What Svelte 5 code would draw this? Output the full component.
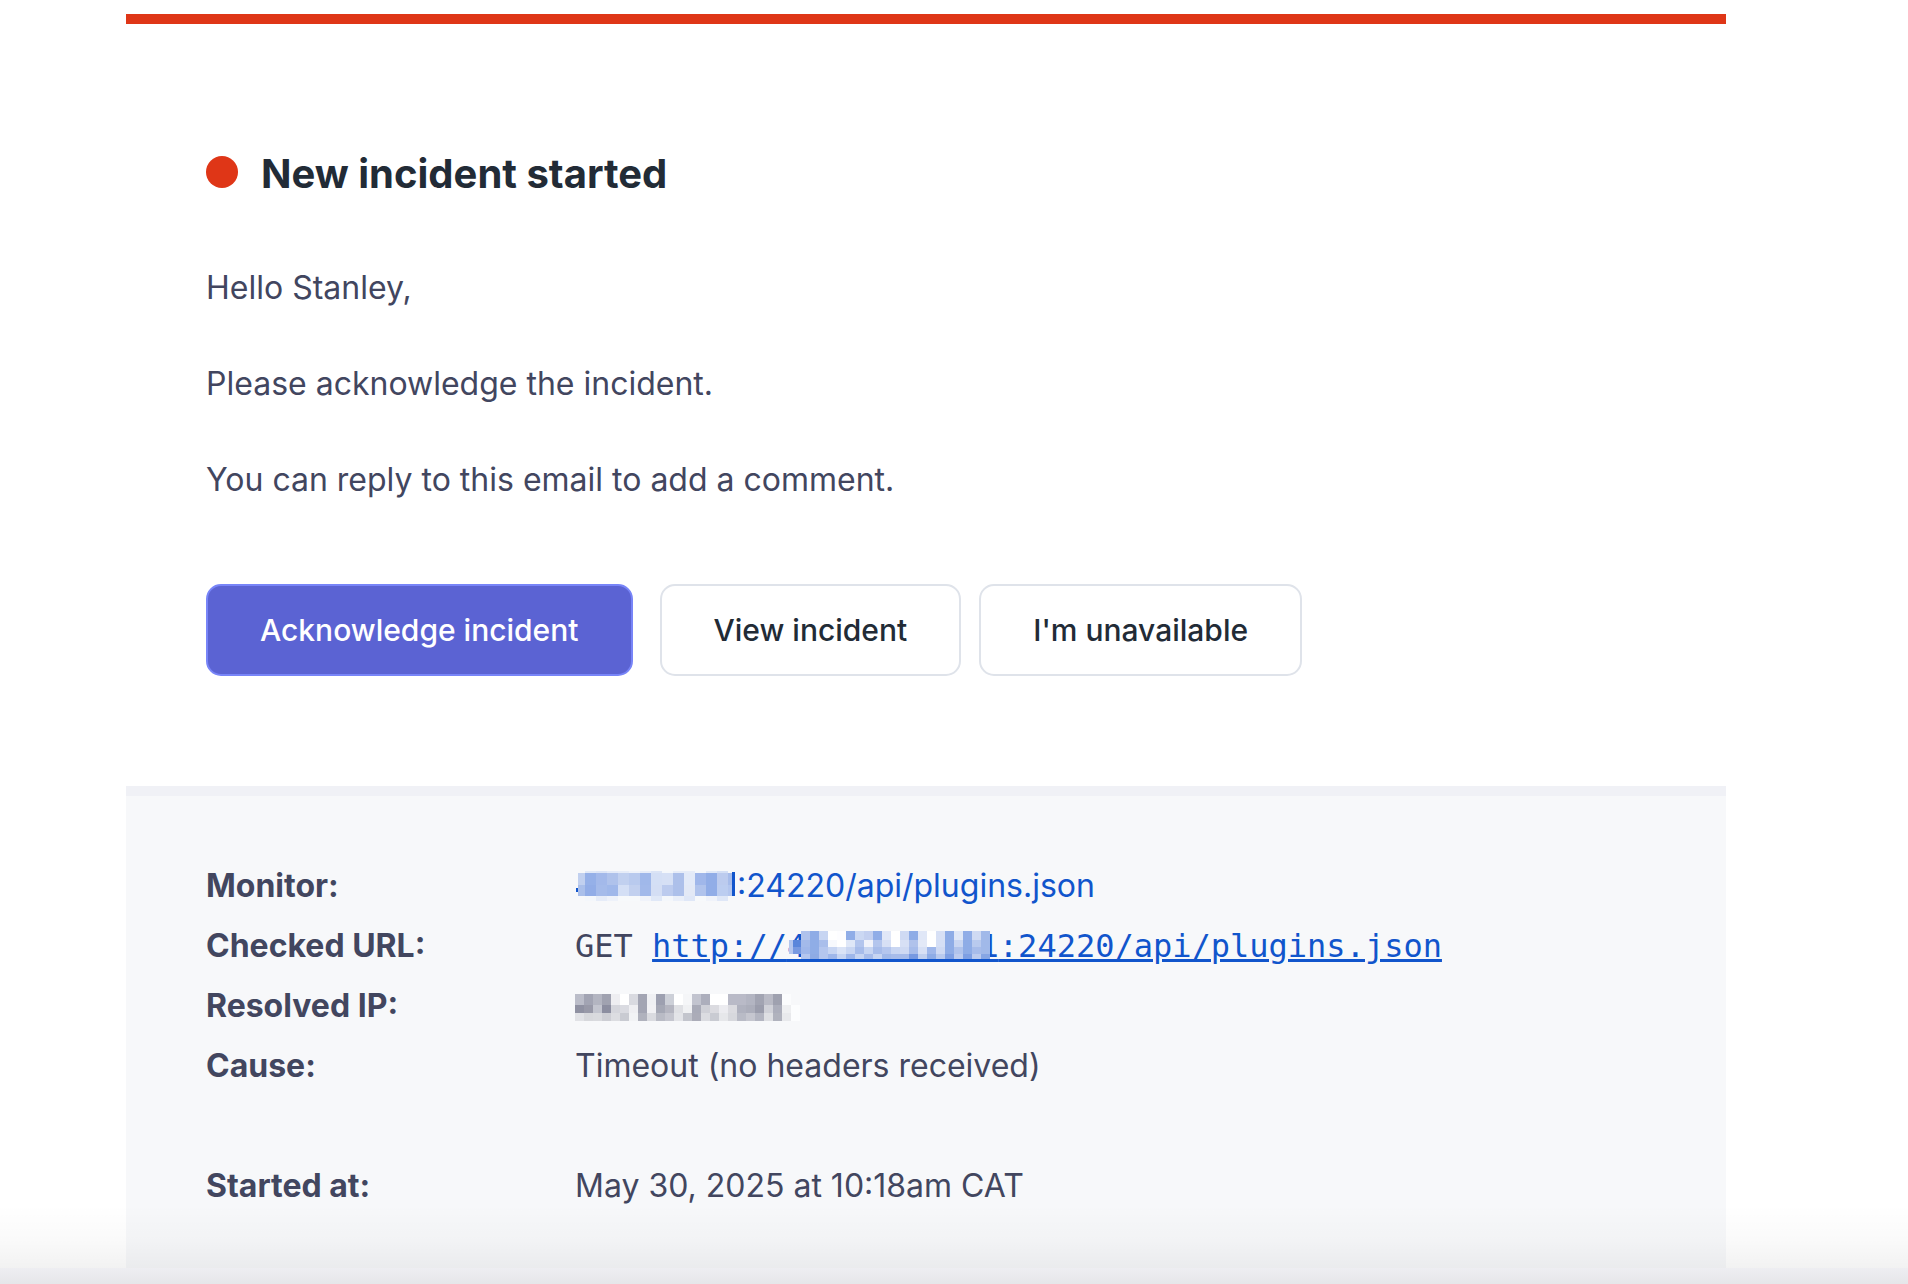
<script lang="ts">
    const paragraphs = [
        'Hello Stanley,',
        'Please acknowledge the incident.',
        'You can reply to this email to add a comment.'
    ];

    // pixelated masks over the redacted addresses, one list of colours per row
    type Row = { y: number; h: number; cells: string[] };

    const monitorMask: Row[] = [
        { y: 0, h: 2, cells: 'e0e8f7 dbe4f6 e3eaf8 e6ecf8 eef2fa e6ecf8 dbe4f6 f4f7fb e6ecf8 e6ecf8 f4f7fb e0e8f7 d4dff5'.split(' ') },
        { y: 2, h: 12, cells: '95b0e8 a3b9ea afc2eb c1d0ef b9caee a0b8ea d4dff5 d6e0f5 adc0ea e3eaf8 a0b7ea 91ade7 bccbee'.split(' ') },
        { y: 14, h: 11, cells: '92ade7 a5bbea a0b8ea d4dff5 c2d0ef a2b9ea d4def4 bccbee adc0ea e3e9f6 b0c3ec 91ade7 bccdf0'.split(' ') },
        { y: 25, h: 5, cells: 'f4f7fb e6ecf8 eef2fa f7f9fb f7f9fb f0f3fa e0e8f7 f4f7fb eaeff9 dfe7f7 f7f9fb f0f3fa dfe7f7'.split(' ') }
    ];

    const urlMask: Row[] = [
        { y: 0, h: 9, cells: 'afc2ec 8eace6 c7d5f2 ffffff fdfdff 90ade7 cbd8f3 c3d0f0 90ade7 e0e7f7 ffffff cfdaf3 8eace6 e0e7f7 ffffff d7e0f5 8eace6 dfe7f7 90ade7 cfdaf3 a1b9e9'.split(' ') },
        { y: 9, h: 7, cells: 'a3baea 8fade6 a9beeb f7f9fd ffffff dfe7f7 b3c5ed f0f2fa b3c5ed d7e0f5 ffffff d7e0f5 b0c2eb e3e9f7 ffffff d5dff5 8eace6 c9d6f2 8eace6 b9caee a1b9e9'.split(' ') },
        { y: 16, h: 7, cells: '9fb7ea 8fade6 b4c6ee c7d5f2 dae3f6 c9d6f2 a7bcea c7d5f2 a7bcea b4c6ee c9d6f2 cfdaf3 a7bcea d7e0f5 9fb7ea cfdaf3 8eace6 b0c3ec 8eace6 a7bcea a1b9e9'.split(' ') },
        { y: 23, h: 5, cells: 'b4c6ee 8eabe4 b4c6ee 9fb7ea c7d5f2 9fb7ea c7d5f2 a7bcea c7d5f2 a1b9e9 a7bcea a7bcea 7799e1 c1d0ef 8eace6 b9caee 7e9fe3 bccbee 7e9fe3 bccbee 87a6e4'.split(' ') }
    ];

    const ipMask: Row[] = [
        { y: 0, h: 11, cells: 'bbbdc9 a2a4b3 b3b5c1 a0a2b0 eeeef1 ffffff d9dae0 a3a5b3 eff0f3 9da0b0 cdd0d8 ffffff f5f6f8 c2c4cf acaebc ffffff ffffff b9bac7 b9bac7 b3b5c2 a2a4b2 b9bac5 9fa1af fbfcfd f7f8fa'.split(' ') },
        { y: 11, h: 8, cells: '8f91a2 9899a8 c3c5cf 8c8ea0 d5d6dc dadbe1 efeff2 a3a5b3 f1f1f4 a5a8b5 b5b6c1 dfe0e4 f0f1f3 a9abb8 cfd0d7 dbdbe0 ececf0 dbdbe0 b0b2bf acaebb 9b9dac d0d1d8 acaebb eeeff1 fcfdfe'.split(' ') },
        { y: 19, h: 8, cells: 'e1e2e6 d7d8dc d9dade cdced4 dcdde1 c9cbd2 f2f3f5 b0b2bd dadbe0 b9bbc5 c5c6cf e3e4e8 c3c5cd abacb8 dbdce1 c9cbd2 e6e7ea d7d8dd b9bbc6 c5c6cf b3b5c1 dedfe3 b0b2bd e8e9ec fcfdfe'.split(' ') }
    ];
</script>

{#snippet cells(rows: Row[], size: number, start: number)}
    {#each rows as row}
        {#each row.cells as c, i}
            <rect x={start + i * size} y={row.y} width={size} height={row.h} fill={'#' + c} />
        {/each}
    {/each}
{/snippet}

<div class="page">
    <main class="email">
        <section class="message">
            <h1><span class="dot"></span>New incident started</h1>
            {#each paragraphs as text}
                <p>{text}</p>
            {/each}
            <div class="actions">
                <button class="primary" type="button">Acknowledge incident</button>
                <button type="button">View incident</button>
                <button type="button">I'm unavailable</button>
            </div>
        </section>

        <section class="details">
            <table>
                <tbody>
                    <tr>
                        <th scope="row">Monitor:</th>
                        <td>
                            <a class="plain" href="#monitor"><svg class="mask" width="160" height="30" viewBox="0 0 160 30" shape-rendering="crispEdges" aria-hidden="true">
                                <path d="M1 17h2v4h-2z" fill="#1155cc" />
                                <path d="M3 2h7v12h-7z" fill="#c1d0ef" />
                                <path d="M3 14h7v11h-7z" fill="#aabfea" />
                                {@render cells(monitorMask, 11, 10)}
                                <path d="M153 2h4v12h-4z" fill="#a7bcea" />
                                <path d="M153 14h4v11h-4z" fill="#b4c6ee" />
                                <path d="M157 1h3v24h-3z" fill="#1155cc" />
                            </svg><span class="after">:24220/api/plugins.json</span></a>
                        </td>
                    </tr>
                    <tr>
                        <th scope="row">Checked URL:</th>
                        <td class="mono">GET <a href="#url">http://<span class="hidden">4{'\u00a0'.repeat(9)}1<svg width="203" height="28" viewBox="0 0 203 28" shape-rendering="crispEdges" aria-hidden="true">
                            <path d="M0 9h4v14h-4z" fill="#b4c6ee" />
                            <path d="M4 9h8v7h-8z" fill="#5a86db" />
                            <path d="M4 16h8v7h-8z" fill="#7799e1" />
                            {@render cells(urlMask, 9, 12)}
                        </svg></span>:24220/api/plugins.json</a></td>
                    </tr>
                    <tr>
                        <th scope="row">Resolved IP:</th>
                        <td>
                            <svg class="mask" width="225" height="27" viewBox="0 0 225 27" shape-rendering="crispEdges" aria-hidden="true">
                                {@render cells(ipMask, 9, 0)}
                            </svg>
                        </td>
                    </tr>
                    <tr>
                        <th scope="row">Cause:</th>
                        <td>Timeout (no headers received)</td>
                    </tr>
                </tbody>
                <tbody class="times">
                    <tr>
                        <th scope="row">Started at:</th>
                        <td>May 30, 2025 at 10:18am CAT</td>
                    </tr>
                </tbody>
            </table>
        </section>
    </main>
    <div class="toolbar"></div>
</div>

<style>
    :global(body){
        background-color: #fff;
    }

    .page{
        box-sizing: border-box;
        display: flex;
        flex-direction: column;
        min-height: 100vh;
        padding-top: 14px;
        font-family: Inter, "Liberation Sans", sans-serif;
        font-size: 32px;
        line-height: 48px;
        color: #42465f;
    }

    .email{
        flex: 1;
        display: flex;
        flex-direction: column;
        margin: 0 182px 0 126px;
        border-top: 10px solid #df3617;
    }

    .message{
        padding: 126px 80px 110px;
    }

    h1{
        display: flex;
        align-items: center;
        gap: 23px;
        margin: 0 0 66px;
        font-size: 40px;
        font-weight: 700;
        color: #222b36;
    }

    .dot{
        width: 32px;
        height: 32px;
        margin-bottom: 4px;
        border-radius: 50%;
        background-color: #df3617;
    }

    p{
        margin: 0 0 48px;
    }

    .actions{
        display: flex;
        flex-wrap: wrap;
        gap: 18px;
        margin-top: 80px;
    }

    button{
        height: 92px;
        padding: 0 52px;
        border: 2px solid #dfe3ea;
        border-radius: 15px;
        background-color: #fff;
        font-family: inherit;
        font-size: 30px;
        font-weight: 500;
        color: #222b36;
    }

    .primary{
        margin-right: 9px;
        border-color: #7885f8;
        background-color: #5b63d3;
        color: #fff;
    }

    .details{
        flex: 1;
        padding: 60px 80px 48px;
        border-top: 10px solid #f0f1f6;
        background-color: #f7f8fa;
    }

    table{
        width: 100%;
        border-collapse: collapse;
    }

    th, td{
        height: 60px;
        padding: 0;
        text-align: left;
        vertical-align: middle;
    }

    th{
        width: 369px;
        font-weight: 700;
    }

    .times::before{
        content: "";
        display: block;
        height: 60px;
    }

    a{
        color: #1155cc;
        text-decoration-thickness: 3px;
    }

    .plain{
        text-decoration: none;
    }

    .mask{
        display: inline-block;
        vertical-align: -4px;
    }

    .after{
        margin-left: 2px;
    }

    .mono{
        font-family: "DejaVu Sans Mono", monospace;
        white-space: nowrap;
    }

    .hidden{
        position: relative;
    }

    .hidden svg{
        position: absolute;
        left: 2px;
        top: 4px;
    }

    /* bottom edge of the window with its soft shadow */
    .toolbar{
        position: relative;
        height: 16px;
        background: linear-gradient(#eeeef2, #e6e6e9);
    }

    .toolbar::before{
        content: "";
        position: absolute;
        left: 0;
        right: 0;
        bottom: 100%;
        height: 64px;
        background: linear-gradient(rgba(0, 0, 0, 0), rgba(0, 0, 0, 0.02) 55%, rgba(0, 0, 0, 0.05));
        pointer-events: none;
    }
</style>
